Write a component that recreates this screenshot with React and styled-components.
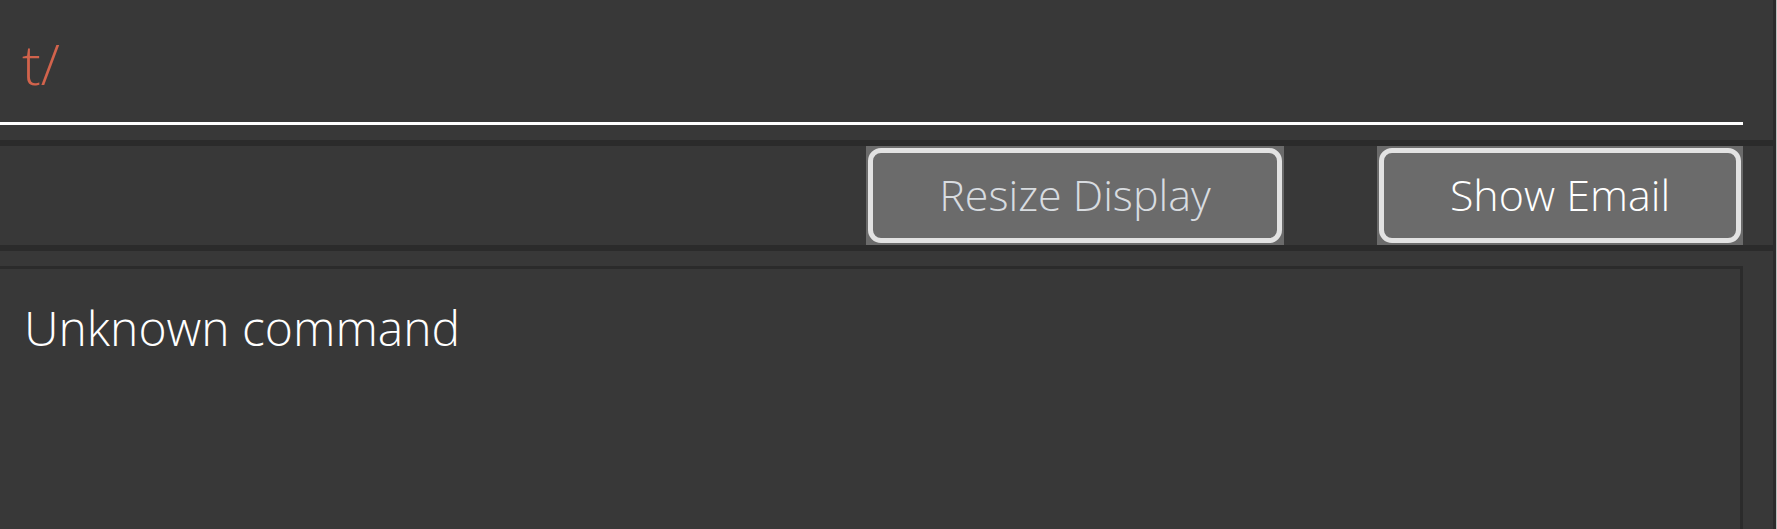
import React from "react";
import styled, { createGlobalStyle } from "styled-components";

const GlobalStyle = createGlobalStyle`
  html, body {
    margin: 0;
    padding: 0;
    background: #383838;
    overflow: hidden;
  }
  body {
    font-family: "Open Sans", "Segoe UI", "Liberation Sans", sans-serif;
  }
`;

function App() {
  return (
    <Wrapper>
      <GlobalStyle />
      <Main>
        <CommandArea>
          <CommandField>
            <CommandText>t/</CommandText>
          </CommandField>
        </CommandArea>
        <Divider />
        <ButtonBar>
          <ActionButton type="button" $muted>
            <ButtonFace>Resize Display</ButtonFace>
          </ActionButton>
          <ActionButton type="button">
            <ButtonFace>Show Email</ButtonFace>
          </ActionButton>
        </ButtonBar>
        <Divider />
        <ResultArea>
          <ResultBox>
            <ResultText>Unknown command</ResultText>
          </ResultBox>
        </ResultArea>
      </Main>
      <ScrollEdge />
    </Wrapper>
  );
}

const Wrapper = styled.div`
  display: flex;
  width: 1777px;
  height: 529px;
  background: #383838;
  overflow: hidden;
`;

const Main = styled.div`
  width: 1773px;
  display: flex;
  flex-direction: column;
`;

const ScrollEdge = styled.div`
  width: 1px;
  border-left: 3px solid #2b2b2b;
  background: #bdbdbd;
`;

const CommandArea = styled.div`
  height: 140px;
  padding-right: 30px;
  box-sizing: border-box;
`;

const CommandField = styled.div`
  height: 125px;
  box-sizing: border-box;
  border-bottom: 3px solid #ffffff;
  padding: 0 0 0 22px;
  display: flex;
  align-items: center;
`;

const CommandText = styled.span`
  font-size: 56px;
  font-weight: 300;
  line-height: 1;
  color: #d2634c;
  margin-top: 4px;
`;

const Divider = styled.div`
  height: 6px;
  background: #2b2b2b;
  flex-shrink: 0;
`;

const ButtonBar = styled.div`
  height: 99px;
  display: flex;
  justify-content: flex-end;
  gap: 93px;
  padding-right: 30px;
  box-sizing: border-box;
`;

const ActionButton = styled.button`
  height: 99px;
  width: ${(p) => (p.$muted ? "418px" : "366px")};
  padding: 2px;
  margin: 0;
  border: none;
  background: #6b6b6b;
  box-sizing: border-box;
  color: ${(p) => (p.$muted ? "#d8dce0" : "#ffffff")};
  font-family: inherit;
  cursor: pointer;
`;

const ButtonFace = styled.span`
  display: flex;
  align-items: center;
  justify-content: center;
  height: 100%;
  box-sizing: border-box;
  border: 5px solid #e2e2e2;
  border-radius: 13px;
  font-size: 43px;
  font-weight: 300;
  padding-bottom: 2px;
`;

const ResultArea = styled.div`
  flex: 1;
  padding: 15px 30px 0 0;
  display: flex;
`;

const ResultBox = styled.div`
  flex: 1;
  border-top: 3px solid #2b2b2b;
  border-right: 3px solid #2b2b2b;
  padding: 30px 0 0 24px;
`;

const ResultText = styled.div`
  font-size: 48px;
  font-weight: 300;
  line-height: 1.2;
  color: #ffffff;
`;

export default App;
